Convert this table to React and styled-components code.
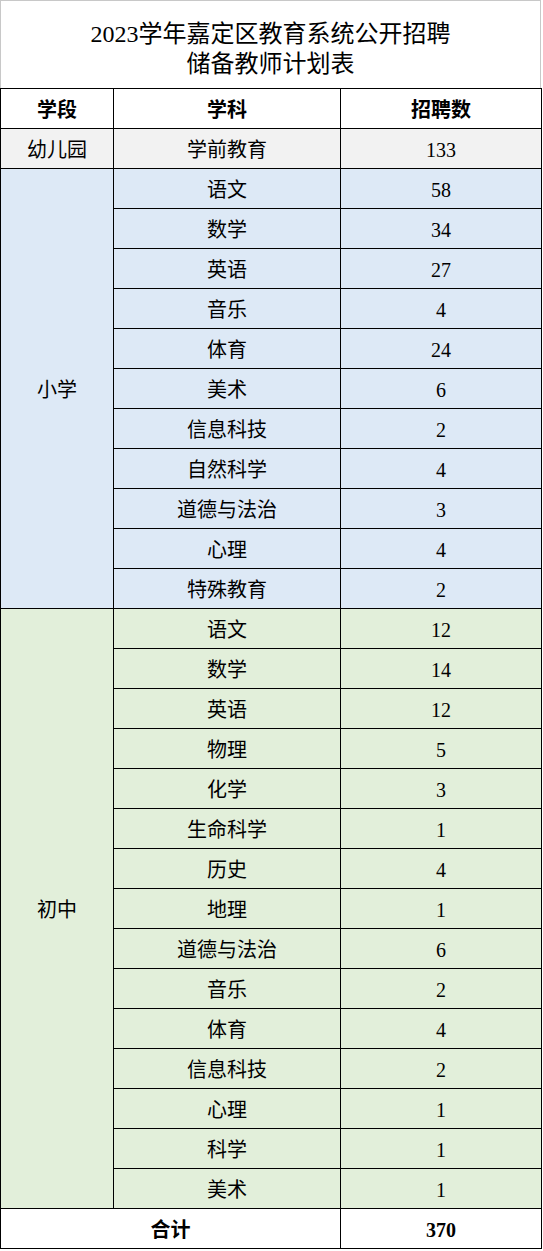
import React from "react";
import styled, { createGlobalStyle } from "styled-components";

const GlobalStyle = createGlobalStyle`
  body {
    margin: 0;
    background: #ffffff;
  }
`;

const FONT = `"Liberation Serif", "Noto Sans CJK SC", serif`;

const Sheet = styled.div`
  width: 541px;
  font-family: ${FONT};
  color: #000;
`;

const TitleBox = styled.div`
  box-sizing: border-box;
  height: 88px;
  border: 1px solid #c8c8c8;
  border-bottom: none;
  padding-top: 18px;
  text-align: center;
  font-size: 24px;
  line-height: 30px;
`;

const Table = styled.table`
  width: 541px;
  border-collapse: collapse;
  table-layout: fixed;
`;

const Row = styled.tr`
  height: 40px;
  background: ${(p) => p.$bg || "#ffffff"};
`;

const Cell = styled.td`
  box-sizing: border-box;
  border: 1px solid #000;
  padding: 2px 0 0;
  height: 40px;
  text-align: center;
  vertical-align: middle;
  font-size: 20px;
  line-height: 20px;
  font-weight: ${(p) => (p.$bold ? 700 : 400)};
`;

const GRAY = "#f2f2f2";
const BLUE = "#dde9f6";
const GREEN = "#e2efda";

const primary = [
  ["语文", 58],
  ["数学", 34],
  ["英语", 27],
  ["音乐", 4],
  ["体育", 24],
  ["美术", 6],
  ["信息科技", 2],
  ["自然科学", 4],
  ["道德与法治", 3],
  ["心理", 4],
  ["特殊教育", 2],
];

const junior = [
  ["语文", 12],
  ["数学", 14],
  ["英语", 12],
  ["物理", 5],
  ["化学", 3],
  ["生命科学", 1],
  ["历史", 4],
  ["地理", 1],
  ["道德与法治", 6],
  ["音乐", 2],
  ["体育", 4],
  ["信息科技", 2],
  ["心理", 1],
  ["科学", 1],
  ["美术", 1],
];

const Group = ({ name, items, bg }) =>
  items.map(([subject, count], i) => (
    <Row key={name + i} $bg={bg}>
      {i === 0 && <Cell rowSpan={items.length}>{name}</Cell>}
      <Cell>{subject}</Cell>
      <Cell>{count}</Cell>
    </Row>
  ));

export default function App() {
  return (
    <>
      <GlobalStyle />
      <Sheet>
        <TitleBox>
          2023学年嘉定区教育系统公开招聘
          <br />
          储备教师计划表
        </TitleBox>
        <Table>
          <colgroup>
            <col style={{ width: "113px" }} />
            <col style={{ width: "227px" }} />
            <col style={{ width: "201px" }} />
          </colgroup>
          <tbody>
            <Row>
              <Cell $bold>学段</Cell>
              <Cell $bold>学科</Cell>
              <Cell $bold>招聘数</Cell>
            </Row>
            <Row $bg={GRAY}>
              <Cell>幼儿园</Cell>
              <Cell>学前教育</Cell>
              <Cell>133</Cell>
            </Row>
            <Group name="小学" items={primary} bg={BLUE} />
            <Group name="初中" items={junior} bg={GREEN} />
            <Row>
              <Cell colSpan={2} $bold>
                合计
              </Cell>
              <Cell $bold>370</Cell>
            </Row>
          </tbody>
        </Table>
      </Sheet>
    </>
  );
}
